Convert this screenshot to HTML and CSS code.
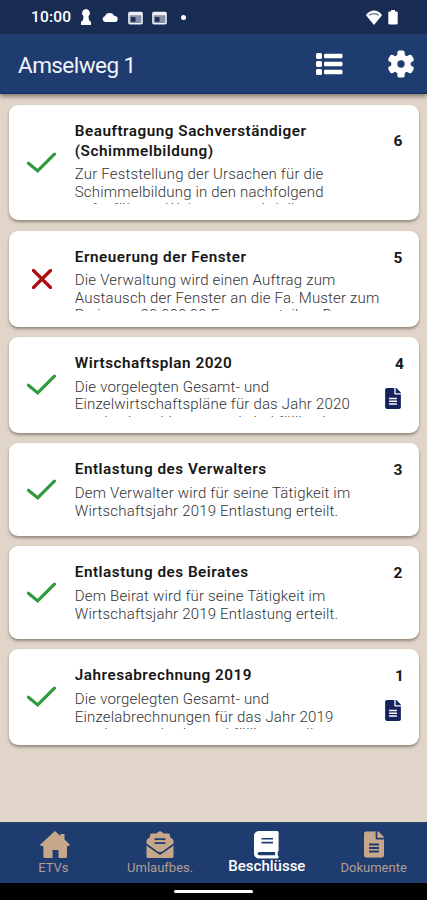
FILE: index.html
```html
<!DOCTYPE html>
<html lang="de">
<head>
<meta charset="utf-8">
<title>Amselweg 1</title>
<link rel="stylesheet" href="styles.css">
</head>
<body>
<svg class="defs" width="0" height="0">
  <symbol id="check" viewBox="0 0 29 22"><path d="M1.400 11.200 10.700 18.900 27.400 2.200" fill="none" stroke="#32993f" stroke-width="3.200" stroke-linecap="round"/></symbol>
  <symbol id="cross" viewBox="0 0 20 20"><path d="M1.500 1.500 18.500 18.500M18.500 1.500 1.500 18.500" fill="none" stroke="#ac0c10" stroke-width="3.200" stroke-linecap="round"/></symbol>
  <symbol id="doc" viewBox="0 0 384 512"><path fill="currentColor" fill-rule="evenodd" d="M224 136V0H48C20 0 0 20 0 48v416c0 28 20 48 48 48h288c28 0 48-20 48-48V160H248c-13 0-24-11-24-24zM96 236h192v38H96zm0 68h192v38H96zm0 68h192v38H96zM384 122v6H256V0h6c6 0 12 3 17 7l98 98c4 5 7 11 7 17z"/></symbol>
</svg>
<div class="status">
  <span class="clock">10:00</span>
  <svg class="pawn" width="12" height="18" viewBox="0 0 12 18"><path fill="#fff" d="M6 1a4 4 0 0 1 2.800 6.800L8.500 9l.5 3 2 2v3H1v-3l2-2 .5-3-.3-1.200A4 4 0 0 1 6 1z"/></svg>
  <svg class="cloud" width="16" height="10" viewBox="0 0 16 10"><path fill="#fff" d="M3 10a3 3 0 0 1-.2-5.800A5.200 5.200 0 0 1 12.400 4 3 3 0 0 1 13 10z"/></svg>
  <svg class="news" width="15" height="14" viewBox="0 0 16 14"><rect x="1" y="1" width="14" height="12" rx="1" fill="#8792a9" stroke="#eef0f5" stroke-width="1.600"/><path fill="#eef0f5" d="M1 1h14v3H1z"/><path fill="#182c55" d="M3 6h5v5H3z"/></svg>
  <svg class="news" width="15" height="14" viewBox="0 0 16 14"><rect x="1" y="1" width="14" height="12" rx="1" fill="#8792a9" stroke="#eef0f5" stroke-width="1.600"/><path fill="#eef0f5" d="M1 1h14v3H1z"/><path fill="#182c55" d="M3 6h5v5H3z"/></svg>
  <span class="dot"></span>
  <svg class="wifi" width="18" height="15" viewBox="0 0 18 15"><path fill="#fff" d="M9 15 1 5.200C3 2 6 .5 9 .5S15 2 17 5.200z"/><path d="M4 5.200c3-2 7-2 10 0" fill="none" stroke="#66718c" stroke-width="1.200"/></svg>
  <svg class="battery" width="10" height="16" viewBox="0 0 10 16"><path fill="#fff" d="M3 1h4v1.500h1.500c.8 0 1.200.5 1.200 1.200v10.600c0 .7-.4 1.200-1.200 1.200h-7c-.8 0-1.200-.5-1.200-1.200V3.700c0-.7.4-1.200 1.200-1.200H3z"/></svg>
</div>
<header class="bar">
  <h1>Amselweg 1</h1>
  <svg class="list" width="27" height="22" viewBox="0 0 27 22"><g fill="#fff"><rect x="0" y="0" width="6" height="6" rx="1.500"/><rect x="0" y="8" width="6" height="6" rx="1.500"/><rect x="0" y="16" width="6" height="6" rx="1.500"/><rect x="8" y=".7" width="18.500" height="4.600" rx="1.200"/><rect x="8" y="8.700" width="18.500" height="4.600" rx="1.200"/><rect x="8" y="16.700" width="18.500" height="4.600" rx="1.200"/></g></svg>
  <svg class="gear" width="28" height="28" viewBox="-14 -14 28 28"><g fill="#fff"><circle r="9.800"/><rect id="tooth" x="-3.700" y="-13.600" width="7.400" height="27.200" rx="2.200"/><use href="#tooth" transform="rotate(60)"/><use href="#tooth" transform="rotate(120)"/></g><circle r="3.700" fill="#1f3c70"/></svg>
</header>
<main>
  <article class="card tall">
    <svg class="mark" width="29" height="22"><use href="#check"/></svg>
    <div class="text"><h2>Beauftragung Sachverständiger<br>(Schimmelbildung)</h2><p>Zur Feststellung der Ursachen für die<br>Schimmelbildung in den nachfolgend<br>aufgeführten Wohnungen wird die</p></div>
    <div class="side"><b>6</b></div>
  </article>
  <article class="card">
    <svg class="mark" width="20" height="20"><use href="#cross"/></svg>
    <div class="text"><h2>Erneuerung der Fenster</h2><p>Die Verwaltung wird einen Auftrag zum<br>Austausch der Fenster an die Fa. Muster zum<br>Preis von 20.000,00 Euro zu erteilen. Der</p></div>
    <div class="side"><b>5</b></div>
  </article>
  <article class="card">
    <svg class="mark" width="29" height="22"><use href="#check"/></svg>
    <div class="text"><h2>Wirtschaftsplan 2020</h2><p>Die vorgelegten Gesamt- und<br>Einzelwirtschaftspläne für das Jahr 2020<br>werden beschlossen und sind fällig ab</p></div>
    <div class="side"><b>4</b><svg class="file" width="16" height="21"><use href="#doc"/></svg></div>
  </article>
  <article class="card">
    <svg class="mark" width="29" height="22"><use href="#check"/></svg>
    <div class="text"><h2>Entlastung des Verwalters</h2><p>Dem Verwalter wird für seine Tätigkeit im<br>Wirtschaftsjahr 2019 Entlastung erteilt.</p></div>
    <div class="side"><b>3</b></div>
  </article>
  <article class="card">
    <svg class="mark" width="29" height="22"><use href="#check"/></svg>
    <div class="text"><h2>Entlastung des Beirates</h2><p>Dem Beirat wird für seine Tätigkeit im<br>Wirtschaftsjahr 2019 Entlastung erteilt.</p></div>
    <div class="side"><b>2</b></div>
  </article>
  <article class="card">
    <svg class="mark" width="29" height="22"><use href="#check"/></svg>
    <div class="text"><h2>Jahresabrechnung 2019</h2><p>Die vorgelegten Gesamt- und<br>Einzelabrechnungen für das Jahr 2019<br>werden genehmigt und fällig gestellt.</p></div>
    <div class="side"><b>1</b><svg class="file" width="16" height="21"><use href="#doc"/></svg></div>
  </article>
</main>
<nav>
  <a><svg class="house" width="30" height="27" viewBox="0 0 30 27"><path fill="currentColor" d="M15 0 20.500 5V3h4v5.600L30 13.700 28.800 15H27v10.500c0 .8-.5 1.500-1.500 1.500H18.500v-8h-6v8H5c-1 0-1.600-.7-1.600-1.500V15H1.200L0 13.700z"/></svg><span>ETVs</span></a>
  <a><svg width="28" height="27" viewBox="0 0 28 27"><path fill="currentColor" d="M14 0l4 2.500h4.500q1.500 0 1.500 1.500v2l3.500 3v4L14 22.500.5 13V9L4 6V4q0-1.500 1.500-1.500H10z"/><path fill="#1f3c70" d="M8.500 7.300h11V9h-11zm0 4h11V13h-11z"/><path fill="currentColor" d="M.5 14.500 14 24l13.500-9.500v11c0 .9-.6 1.500-1.500 1.500H2c-.9 0-1.500-.6-1.500-1.500z"/><path d="M.5 13.400 11.500 21.200Q14 22.800 16.500 21.200L27.500 13.400" fill="none" stroke="#1f3c70" stroke-width="1.400"/></svg><span>Umlaufbes.</span></a>
  <a class="active"><svg width="25" height="28" viewBox="0 0 25 28"><path fill="currentColor" d="M5 0h18c1 0 1.600.6 1.600 1.500v18c0 .7-.3 1-.8 1.400-.3 1.200-.3 2.500 0 3.700.5.300.8.700.8 1.400 0 1-.6 1.500-1.600 1.500H5c-2.800 0-5-2.200-5-5V5c0-2.800 2.200-5 5-5z"/><path fill="#1f3c70" d="M7.500 7H19v1.600H7.500zm0 3.800H19v1.600H7.500zM5.200 21h15.900v3.200H5.200a1.600 1.600 0 0 1 0-3.200z"/></svg><span>Beschlüsse</span></a>
  <a><svg width="20" height="27" viewBox="0 0 384 512"><use href="#doc" width="384" height="512"/></svg><span>Dokumente</span></a>
</nav>
<div class="home"><span></span></div>
</body>
</html>
```
FILE: styles.css
```css
* { box-sizing: border-box; }
body {
  margin: 0;
  width: 427px;
  height: 900px;
  overflow: hidden;
  display: flex;
  flex-direction: column;
  background: #e1d5ca;
  font-family: Roboto, sans-serif;
}
svg { display: block; flex: none; }
.defs { position: absolute; }
.status {
  height: 34px;
  flex: none;
  display: flex;
  align-items: center;
  padding: 0 29px 0 31px;
  background: #192d54;
  color: #fff;
}
.clock { width: 41px; font-size: 15.500px; font-weight: 500; letter-spacing: .2px; }
.pawn { margin-left: 8px; }
.cloud { margin-left: 10px; }
.news { margin-left: 9.500px; margin-top: 2px; }
.dot { width: 5px; height: 5px; margin-left: 13.500px; border-radius: 50%; background: #fff; }
.wifi { margin-left: auto; margin-right: 5px; }
.bar {
  height: 60px;
  flex: none;
  display: flex;
  align-items: center;
  padding: 0 12px 0 18px;
  background: #1f3c70;
  border-bottom: 1px solid #152d63;
  box-shadow: 0 2px 5px rgba(50, 40, 30, .6);
  z-index: 1;
}
h1 { margin: 2px auto 0 0; font-size: 22.500px; font-weight: 400; letter-spacing: -.55px; color: #f1f3f8; }
.list { margin-right: 44px; }
main {
  flex: 1;
  display: flex;
  flex-direction: column;
  gap: 10.600px;
  padding: 11px 8.500px 0 9.300px;
}
.card {
  display: grid;
  grid-template-columns: 65.500px 1fr auto;
  padding: 17px 16px 15.800px 0;
  border-radius: 9px;
  background: #fff;
  box-shadow: 0 2px 3px rgba(70, 60, 45, .5);
}
.mark { place-self: center; margin: -1px 1px 0 0; }
h2 {
  margin: 0 0 5px;
  font-size: 15.300px;
  line-height: 19.600px;
  font-weight: 600;
  letter-spacing: .5px;
  color: #161616;
}
.text { white-space: nowrap; width: 310px; }
p {
  margin: 0;
  max-height: 38.300px;
  overflow: hidden;
  font-size: 15px;
  line-height: 17.500px;
  font-weight: 300;
  letter-spacing: .18px;
  color: #333;
}
.side { display: flex; flex-direction: column; align-items: flex-end; font-size: 15.500px; line-height: 20px; color: #181818; }
.tall .side { padding-top: 9px; }
.file { margin: 14px 3px 0 0; color: #14235f; }
nav {
  height: 61px;
  flex: none;
  display: grid;
  grid-template-columns: repeat(4, 1fr);
  background: #1f3c70;
  border-top: 1px solid #2d4671;
  color: #c6a789;
}
nav a { display: flex; flex-direction: column; align-items: center; padding-top: 8px; font-size: 13px; line-height: 16px; }
nav span { margin-top: 2px; color: #b09f93; }
.house { margin-left: 4px; }
nav .active { color: #fff; font-size: 15px; font-weight: 500; padding-top: 8px; }
nav .active span { margin-top: -1px; color: #fff; }
.home { height: 17px; flex: none; background: #000; display: flex; justify-content: center; padding-top: 7px; }
.home span { width: 79px; height: 3px; border-radius: 2px; background: #fff; }
```
